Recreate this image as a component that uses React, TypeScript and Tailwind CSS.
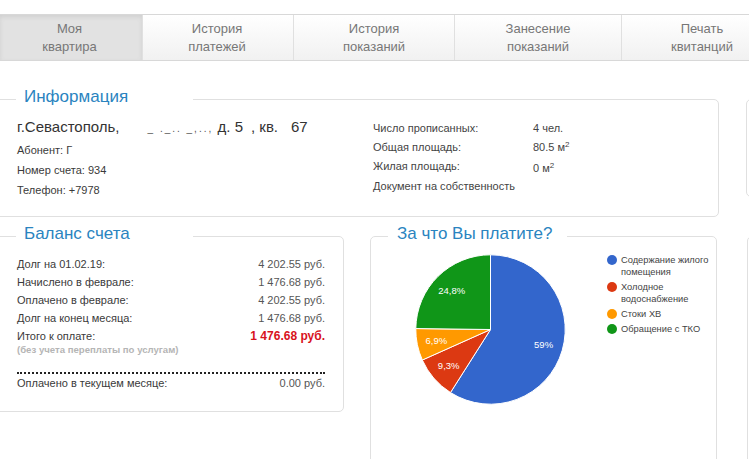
const font = { fontFamily: '"Liberation Sans", Arial, sans-serif' };

const tabs = [
  { top: "Моя", bottom: "квартира", width: "w-[143px] pr-[3px]", active: true },
  { top: "История", bottom: "платежей", width: "w-[151px] pr-[2px]" },
  { top: "История", bottom: "показаний", width: "w-[161px]" },
  { top: "Занесение", bottom: "показаний", width: "w-[167px]" },
  { top: "Печать", bottom: "квитанций", width: "w-[161px]" },
];

const balance = [
  ["Долг на 01.02.19:", "4 202.55 руб."],
  ["Начислено в феврале:", "1 476.68 руб."],
  ["Оплачено в феврале:", "4 202.55 руб."],
  ["Долг на конец месяца:", "1 476.68 руб."],
];

const slices = [
  { value: 59, label: "59%", color: "#3366cc" },
  { value: 9.3, label: "9,3%", color: "#dc3912" },
  { value: 6.9, label: "6,9%", color: "#ff9900" },
  { value: 24.8, label: "24,8%", color: "#109618" },
];

function Pie() {
  const r = 74.7;
  const cx = 76.5;
  const cy = 75.5;
  let start = 0;
  return (
    <svg width="152" height="152" viewBox="0 0 152 152" className="shrink-0">
      {slices.map((s) => {
        const end = start + (s.value / 100) * Math.PI * 2;
        const mid = (start + end) / 2;
        const x1 = cx + r * Math.sin(start);
        const y1 = cy - r * Math.cos(start);
        const x2 = cx + r * Math.sin(end);
        const y2 = cy - r * Math.cos(end);
        const large = end - start > Math.PI ? 1 : 0;
        const lx = cx + r * 0.74 * Math.sin(mid);
        const ly = cy - r * 0.73 * Math.cos(mid);
        start = end;
        return (
          <g key={s.label}>
            <path
              d={`M${cx} ${cy}L${x1} ${y1}A${r} ${r} 0 ${large} 1 ${x2} ${y2}Z`}
              fill={s.color}
              stroke="#fff"
              strokeWidth="1"
            />
            <text x={lx} y={ly + 3.5} textAnchor="middle" fill="#fff" fontSize="9.5" style={font}>
              {s.label}
            </text>
          </g>
        );
      })}
    </svg>
  );
}

function LegendItem({ color, children }: { color: string; children: React.ReactNode }) {
  return (
    <div className="flex gap-[4px]">
      <span className="mt-[1px] h-[10px] w-[10px] shrink-0 rounded-full" style={{ backgroundColor: color }} />
      <span className="w-[96px]">{children}</span>
    </div>
  );
}

function Title({ children, className }: { children: string; className: string }) {
  return (
    <legend className={`h-[25px] text-[17px] leading-[20px] text-[#2a84bf] ${className}`}>{children}</legend>
  );
}

export default function App() {
  return (
    <div className="h-[459px] w-[749px] overflow-hidden bg-white text-[11px] text-[#3a3a3a]" style={font}>
      <nav className="mt-[14px] flex h-[47px] border-y border-[#d8d8d8]">
        {tabs.map((t) => (
          <div
            key={t.bottom + t.width}
            className={`${t.width} flex shrink-0 flex-col items-center justify-center border-r border-[#e0e0e0] text-[13px] leading-[18px] text-[#777] ${
              t.active
                ? "bg-[#e2e2e2] shadow-[inset_0_2px_4px_#d0d0d0]"
                : "bg-gradient-to-b from-white to-[#f1f1f1]"
            }`}
          >
            <span>{t.top}</span>
            <span>{t.bottom}</span>
          </div>
        ))}
      </nav>

      <div className="ml-[-10px] mt-[26px] flex items-start">
        <fieldset className="h-[130px] w-[729px] min-w-0 shrink-0 rounded-[5px] border border-[#e0e0e0] pl-[26px] pt-[5px]">
          <Title className="ml-[-1px] w-[177px] pl-[8px]">Информация</Title>
          <div className="flex items-start">
            <div className="w-[356px]">
              <div className="whitespace-nowrap text-[15px] leading-[20px] text-[#333]">
                г.Севастополь,
                <span className="ml-[28px] inline-block w-[65px] text-[10px] tracking-[2px] text-[#555]">_ ._.. _,..,</span>
                <span className="ml-[5px]">д. 5</span>
                <span className="ml-[8px]">, кв.</span>
                <span className="ml-[13px]">67</span>
              </div>
              <div className="mt-[4px] leading-[14px]">Абонент: Г</div>
              <div className="mt-[6px] leading-[14px]">Номер счета: 934</div>
              <div className="mt-[6px] leading-[14px]">Телефон: +7978</div>
            </div>
            <div className="mt-[4px] grid grid-cols-[160px_80px] gap-y-[5px] leading-[14px] text-[#444]">
              <div className="h-[14px]">Число прописанных:</div>
              <div className="h-[14px]">4 чел.</div>
              <div className="h-[14px]">Общая площадь:</div>
              <div className="h-[14px]">
                80.5 м<sup className="text-[8px] leading-none">2</sup>
              </div>
              <div className="h-[14px]">Жилая площадь:</div>
              <div className="h-[14px] pt-[2px]">
                0 м<sup className="text-[8px] leading-none">2</sup>
              </div>
              <div className="col-span-2 mt-[1px] h-[14px]">Документ на собственность</div>
            </div>
          </div>
        </fieldset>
        <div className="ml-[27px] mt-[12px] h-[98px] w-[40px] shrink-0 rounded-[5px] border border-[#e0e0e0]" />
      </div>

      <div className="ml-[-10px] mt-[7px] flex items-start">
        <fieldset className="h-[188px] w-[354px] min-w-0 shrink-0 rounded-[5px] border border-[#e0e0e0] pl-[26px] pr-[18px] pt-[6px]">
          <Title className="ml-[-1px] w-[177px] pl-[8px]">Баланс счета</Title>
          {balance.map(([k, v]) => (
            <div key={k} className="flex h-[18px] items-center justify-between">
              <span>{k}</span>
              <span className="text-[#555]">{v}</span>
            </div>
          ))}
          <div className="flex h-[18px] items-center justify-between">
            <span>Итого к оплате:</span>
            <span className="text-[12px] font-bold text-[#d8121c]">1 476.68 руб.</span>
          </div>
          <div className="text-[9.6px] font-bold leading-[9px] text-[#b5b5b5]">(без учета переплаты по услугам)</div>
          <div className="mt-[18px] border-t-2 border-dotted border-[#222]" />
          <div className="mt-[1px] flex h-[16px] items-center justify-between">
            <span>Оплачено в текущем месяце:</span>
            <span className="text-[#555]">0.00 руб.</span>
          </div>
        </fieldset>
        <fieldset className="ml-[26px] h-[260px] w-[347px] min-w-0 shrink-0 rounded-[5px] border border-[#e0e0e0] pl-[43px] pt-[5px]">
          <Title className="ml-[-26px] w-[179px] pl-[9px]">За что Вы платите?</Title>
          <div className="flex items-start">
            <Pie />
            <div className="ml-[41px] flex flex-col gap-[3px] text-[9.3px] leading-[12px] text-[#444]">
              {[
                ["#3366cc", "Содержание жилого помещения"],
                ["#dc3912", "Холодное водоснабжение"],
                ["#ff9900", "Стоки ХВ"],
                ["#109618", "Обращение с ТКО"],
              ].map(([color, name]) => (
                <LegendItem key={name} color={color}>
                  {name}
                </LegendItem>
              ))}
            </div>
          </div>
        </fieldset>
        <div className="ml-[30px] mt-[12px] h-[260px] w-[40px] shrink-0 rounded-[5px] border border-[#e0e0e0]" />
      </div>
    </div>
  );
}
